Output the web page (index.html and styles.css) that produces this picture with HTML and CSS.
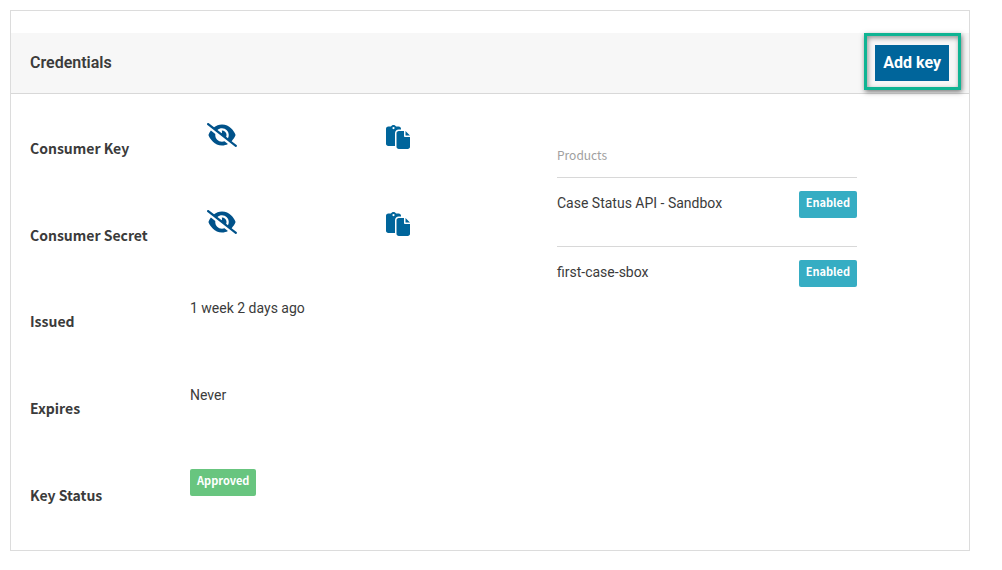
FILE: index.html
```html
<!DOCTYPE html>
<html lang="en">
<head>
<meta charset="utf-8">
<meta name="viewport" content="width=device-width, initial-scale=1">
<title>Credentials</title>
<link rel="stylesheet" href="styles.css">
</head>
<body>
<svg class="sprite" aria-hidden="true">
  <symbol id="eye-slash" viewBox="0 0 640 512"><path d="M38.8 5.1C28.4-3.1 13.3-1.2 5.1 9.2S-1.2 34.7 9.2 42.9l592 464c10.4 8.2 25.5 6.3 33.7-4.1s6.3-25.5-4.1-33.7L525.6 386.7c39.6-40.6 66.4-86.1 79.9-118.4c3.3-7.9 3.3-16.7 0-24.6c-14.9-35.7-46.2-87.7-93-131.1C465.5 68.8 400.8 32 320 32c-68.2 0-125 26.3-169.3 60.8L38.8 5.1zM223.1 149.5C248.6 126.2 282.7 112 320 112c79.5 0 144 64.5 144 144c0 24.9-6.3 48.3-17.4 68.7L408 294.5c8.4-19.3 10.6-41.4 4.8-63.3c-11.1-41.5-47.8-69.4-88.6-71.1c-5.8-.2-9.2 6.1-7.4 11.7c2.1 6.4 3.3 13.2 3.3 20.3c0 10.2-2.4 19.8-6.6 28.3l-90.3-70.8zM373 389.9c-16.4 6.5-34.3 10.1-53 10.1c-79.5 0-144-64.5-144-144c0-6.9 .5-13.6 1.4-20.2L83.1 161.5C60.3 191.2 44 220.9 34.5 243.7c-3.3 7.9-3.3 16.7 0 24.6c14.9 35.7 46.2 87.7 93 131.1C174.5 443.2 239.2 480 320 480c47.8 0 89.9-12.9 126.2-32.5L373 389.9z"/></symbol>
  <symbol id="paste" viewBox="0 0 512 512"><path d="M160 0c-23.7 0-44.4 12.9-55.4 32H48C21.500 32 0 53.500 0 80V400c0 26.500 21.500 48 48 48H192V176c0-44.200 35.800-80 80-80h48V80c0-26.500-21.500-48-48-48H215.400C204.400 12.900 183.700 0 160 0zM160 40a24 24 0 1 1 0 48 24 24 0 1 1 0-48zM272 128c-26.500 0-48 21.500-48 48V464c0 26.500 21.500 48 48 48H464c26.500 0 48-21.500 48-48V256H408c-13 0-24-11-24-24V128zM416 128V224H512z"/></symbol>
</svg>

<main class="card">
  <header class="card-header">
    <h2 class="card-title">Credentials</h2>
    <div class="highlight"><button class="add-key" type="button">Add key</button></div>
  </header>
  <div class="card-body">
    <dl class="details">
      <div class="detail">
        <dt class="label">Consumer Key</dt>
        <dd class="value secret">
          <button class="icon-button reveal" type="button" aria-label="Show consumer key"><svg class="icon-eye"><use href="#eye-slash"/></svg></button>
          <button class="icon-button copy" type="button" aria-label="Copy consumer key"><svg class="icon-paste"><use href="#paste"/></svg></button>
        </dd>
      </div>
      <div class="detail">
        <dt class="label">Consumer Secret</dt>
        <dd class="value secret">
          <button class="icon-button reveal" type="button" aria-label="Show consumer secret"><svg class="icon-eye"><use href="#eye-slash"/></svg></button>
          <button class="icon-button copy" type="button" aria-label="Copy consumer secret"><svg class="icon-paste"><use href="#paste"/></svg></button>
        </dd>
      </div>
      <div class="detail">
        <dt class="label">Issued</dt>
        <dd class="value">1 week 2 days ago</dd>
      </div>
      <div class="detail">
        <dt class="label">Expires</dt>
        <dd class="value">Never</dd>
      </div>
      <div class="detail">
        <dt class="label">Key Status</dt>
        <dd class="value"><span class="badge approved">Approved</span></dd>
      </div>
    </dl>
    <table class="products">
      <thead>
        <tr><th class="products-heading" colspan="2" scope="col">Products</th></tr>
      </thead>
      <tbody>
        <tr class="product">
          <td class="product-name">Case Status API - Sandbox</td>
          <td class="product-status"><span class="badge enabled">Enabled</span></td>
        </tr>
        <tr class="product">
          <td class="product-name">first-case-sbox</td>
          <td class="product-status"><span class="badge enabled">Enabled</span></td>
        </tr>
      </tbody>
    </table>
  </div>
</main>
</body>
</html>
```
FILE: styles.css
```css
* {
  box-sizing: border-box;
}

body {
  margin: 0;
  padding: 10px 32px 16px 10px;
  background: #fff;
  color: #3b3b3b;
  font: 14px/24px Roboto, sans-serif;
}

.sprite {
  display: none;
}

.card {
  padding: 22px 0 12px;
  border: 1px solid #dcdcdc;
}

.card-header {
  display: flex;
  align-items: flex-start;
  justify-content: space-between;
  min-height: 61px;
  padding: 0 8px 0 19px;
  border-bottom: 1px solid #d8d8d8;
  background: #f7f7f7;
}

.card-title {
  align-self: center;
  margin: 0;
  font-size: 16px;
  font-weight: 600;
}

.highlight {
  padding: 9px 9px 6px 8px;
  border: 3px solid #0fb493;
  box-shadow: 1px 2px 5px rgba(0, 0, 0, 0.5), inset 1px 2px 5px rgba(0, 0, 0, 0.4);
}

.add-key {
  display: block;
  padding: 6px 8px;
  border: 0;
  background: #00659b;
  color: #fff;
  font: 700 16px/24px Roboto, sans-serif;
}

.card-body {
  display: grid;
  grid-template-columns: 527px minmax(0, 300px);
  align-items: start;
  padding: 11px 19px 0;
}

.details {
  display: grid;
  grid-auto-rows: 1fr;
  min-height: 433px;
  margin: 0;
}

.detail {
  display: grid;
  grid-template-columns: 160px 1fr;
}

.label {
  align-self: center;
  font-family: "Noto Sans CJK SC", sans-serif;
  font-weight: 700;
}

.value {
  margin: 0;
  padding-top: 18px;
}

.secret {
  display: grid;
  grid-template-columns: 179px 1fr;
  align-items: start;
  padding-left: 17px;
}

.icon-button {
  display: block;
  justify-self: start;
  padding: 0;
  border: 0;
  background: none;
}

.reveal {
  color: #00528a;
}

.copy {
  margin-top: 2px;
  color: #00659b;
}

.icon-eye,
.icon-paste {
  display: block;
  width: 30px;
  height: 24px;
  fill: currentColor;
}

.icon-paste {
  width: 24px;
}

.badge {
  display: inline-block;
  padding: 0 7px 5px;
  border-radius: 2px;
  color: #fff;
  font: 700 11px/22px "Noto Sans CJK SC", sans-serif;
  vertical-align: top;
}

.approved {
  background: #68c57f;
}

.enabled {
  background: #36adc3;
}

.products {
  width: 100%;
  margin-top: 38px;
  border-collapse: collapse;
}

.products-heading {
  padding: 0 0 10px;
  color: #a0a0a0;
  font: 400 12px/24px "Noto Sans CJK SC", sans-serif;
  text-align: left;
}

.product {
  height: 69px;
  border-top: 1px solid #d8d8d8;
}

.product-name,
.product-status {
  padding: 13px 0 0;
  vertical-align: top;
}

.product-status {
  text-align: right;
}
```
